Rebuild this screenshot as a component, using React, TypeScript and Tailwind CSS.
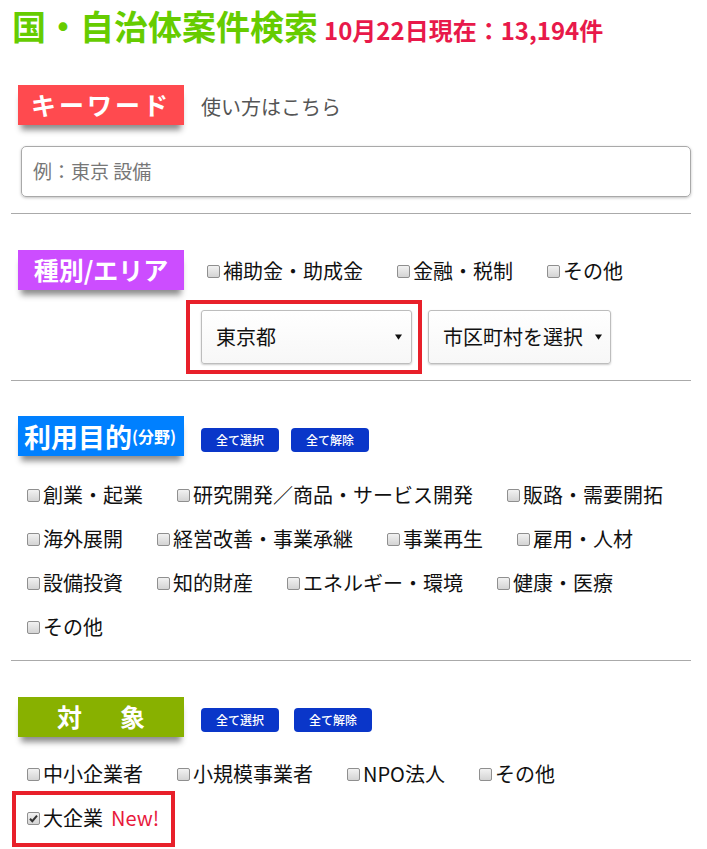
import React from "react";

const FONT = "font-['Noto_Sans_CJK_JP','Noto_Sans',sans-serif]";

function Box({ checked = false }: { checked?: boolean }) {
  return (
    <span className="relative mr-[3px] inline-block h-[13px] w-[13px] shrink-0 rounded-[2px] border border-[#8f8f8f] bg-gradient-to-b from-[#f2f2f2] to-[#d4d4d4]">
      {checked && (
        <svg viewBox="0 0 13 13" className="absolute left-[-1px] top-[-1px] h-[13px] w-[13px]">
          <path d="M3 6.8 L5.3 9.2 L10 3.6" fill="none" stroke="#333" strokeWidth="2" />
        </svg>
      )}
    </span>
  );
}

function Check({ label, checked = false }: { label: string; checked?: boolean }) {
  return (
    <label className="flex h-[44px] items-center text-[20px] leading-none text-[#111]">
      <Box checked={checked} />
      <span>{label}</span>
    </label>
  );
}

function Label({ bg, children, className = "" }: { bg: string; children: React.ReactNode; className?: string }) {
  return (
    <div
      className={`ml-[7px] flex h-[40px] w-[166px] shrink-0 items-center justify-center font-bold text-white shadow-[0_8px_6px_-3px_rgba(0,0,0,0.45)] ${bg} ${className}`}
    >
      {children}
    </div>
  );
}

function Btn({ children }: { children: React.ReactNode }) {
  return (
    <button className="flex h-[24px] w-[78px] items-center justify-center rounded-[4px] bg-[#0a36c9] text-[12px] font-medium leading-none text-white">
      {children}
    </button>
  );
}

function Arrow() {
  return (
    <svg viewBox="0 0 8 6" className="h-[6px] w-[7px]">
      <path d="M0 0 H8 L4 6 Z" fill="#111" />
    </svg>
  );
}

export default function App() {
  return (
    <div className={`min-h-[849px] bg-white pl-[11px] pr-[16px] ${FONT}`}>
      {/* Title */}
      <div className="flex h-[52px] items-baseline pl-[1px] pt-[2px]">
        <h1 className="text-[34px] font-bold leading-[48px] text-[#66cc00]">国・自治体案件検索</h1>
        <span className="ml-[6px] text-[24px] font-bold leading-none text-[#e8194a]">
          10月22日現在：13,194件
        </span>
      </div>

      {/* Keyword */}
      <div className="mt-[33px] flex items-center">
        <Label bg="bg-[#ff4a4f]" className="text-[25px] tracking-[3px]">
          キーワード
        </Label>
        <span className="ml-[17px] mt-[3px] text-[20px] text-[#555]">使い方はこちら</span>
      </div>
      <div className="ml-[10px] mt-[21px] flex h-[51px] items-center rounded-[5px] border border-[#a9a9a9] px-[11px] text-[19px] text-[#777] shadow-[0_1px_3px_rgba(0,0,0,0.25)]">
        例：東京 設備
      </div>
      <div className="mt-[16px] border-t border-[#aaaaaa]" />

      {/* 種別/エリア */}
      <div className="mt-[36px] flex">
        <Label bg="bg-[#cc4dff]" className="text-[25px] font-semibold">
          種別/エリア
        </Label>
        <div className="ml-[17px] flex flex-col">
          <div className="flex h-[40px] items-center gap-x-[34px] pl-[6px] pt-[2px]">
            <Check label="補助金・助成金" />
            <Check label="金融・税制" />
            <Check label="その他" />
          </div>
          <div className="mt-[20px] flex">
            <div className="relative">
              <div className="flex h-[54px] w-[211px] items-center justify-between rounded-[3px] border border-[#bdbdbd] bg-gradient-to-b from-white to-[#f7f7f7] pl-[14px] pr-[9px] text-[20px] text-[#111] shadow-[0_1px_2px_rgba(0,0,0,0.2)]">
                <span>東京都</span>
                <Arrow />
              </div>
              <div className="pointer-events-none absolute -bottom-[10px] -left-[15px] -right-[10px] -top-[10px] border-[4px] border-[#e8202a]" />
            </div>
            <div className="ml-[16px] flex h-[54px] w-[183px] items-center justify-between rounded-[3px] border border-[#bdbdbd] bg-gradient-to-b from-white to-[#f7f7f7] pl-[14px] pr-[8px] text-[20px] text-[#111] shadow-[0_1px_2px_rgba(0,0,0,0.2)]">
              <span>市区町村を選択</span>
              <Arrow />
            </div>
          </div>
        </div>
      </div>
      <div className="mt-[16px] border-t border-[#aaaaaa]" />

      {/* 利用目的 */}
      <div className="mt-[35px] flex items-start">
        <Label bg="bg-[#0080ff]" className="pr-[2px]">
          <span className="text-[27px] leading-none">利用目的</span>
          <span className="text-[16px] leading-none">(分野)</span>
        </Label>
        <div className="ml-[17px] mt-[12px] flex gap-[12px]">
          <Btn>全て選択</Btn>
          <Btn>全て解除</Btn>
        </div>
      </div>
      <div className="mt-[17px] flex flex-wrap gap-x-[34px] pl-[16px]">
        {[
          "創業・起業",
          "研究開発／商品・サービス開発",
          "販路・需要開拓",
          "海外展開",
          "経営改善・事業承継",
          "事業再生",
          "雇用・人材",
          "設備投資",
          "知的財産",
          "エネルギー・環境",
          "健康・医療",
          "その他",
        ].map((t) => (
          <Check key={t} label={t} />
        ))}
      </div>
      <div className="mt-[11px] border-t border-[#aaaaaa]" />

      {/* 対象 */}
      <div className="mt-[36px] flex items-start">
        <Label bg="bg-[#88b100]" className="gap-[38px] text-[25px]">
          <span>対</span>
          <span>象</span>
        </Label>
        <div className="ml-[17px] mt-[11px] flex gap-[15px]">
          <Btn>全て選択</Btn>
          <Btn>全て解除</Btn>
        </div>
      </div>
      <div className="mt-[15px] flex flex-wrap gap-x-[34px] pl-[16px]">
        <Check label="中小企業者" />
        <Check label="小規模事業者" />
        <Check label="NPO法人" />
        <Check label="その他" />
        <div className="relative">
          <label className="flex h-[44px] items-center text-[20px] leading-none text-[#111]">
            <Box checked />
            <span>大企業</span>
            <span className="ml-[8px] text-[#e8193c]">New!</span>
          </label>
          <div className="pointer-events-none absolute -bottom-[7px] -left-[15px] -right-[16px] -top-[5px] border-[4px] border-[#e8202a]" />
        </div>
      </div>
    </div>
  );
}
